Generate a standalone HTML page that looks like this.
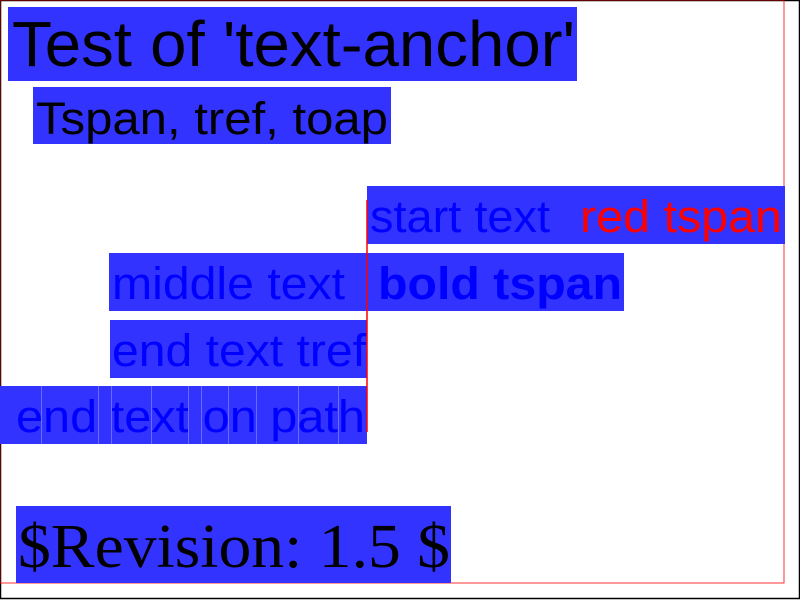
<!DOCTYPE html>
<html><head><style>html,body{margin:0;padding:0;background:#fff}svg{display:block}</style></head>
<body>
<svg width="800" height="600" xmlns="http://www.w3.org/2000/svg" font-family="Liberation Sans, sans-serif">
<rect x="0.5" y="0.5" width="799" height="598" fill="none" stroke="#000" stroke-width="1.5"/>
<rect x="0" y="0" width="784" height="583" fill="none" stroke="#f00" stroke-width="1" opacity="0.8"/>
<g fill="#3333ff">
<rect x="8" y="7" width="569" height="74"/>
<rect x="33" y="87" width="358" height="57"/>
<rect x="367" y="186" width="418" height="58"/>
<rect x="109" y="253" width="258" height="58"/>
<rect x="360" y="253" width="264" height="58"/>
<rect x="110" y="320" width="257" height="58"/>
<rect x="0" y="386" width="367" height="58"/>
<rect x="16" y="506" width="435" height="77"/>
</g>
<line x1="367" y1="200" x2="367" y2="432" stroke="#f00" stroke-width="1.5"/>
<g lengthAdjust="spacingAndGlyphs">
<text x="12" y="66" font-size="64" fill="#000" textLength="563" lengthAdjust="spacingAndGlyphs">Test of 'text-anchor'</text>
<text x="36" y="134" font-size="45" fill="#000" textLength="352" lengthAdjust="spacingAndGlyphs">Tspan, tref, toap</text>
<text x="370" y="232" font-size="45" fill="#0000ff" textLength="180" lengthAdjust="spacingAndGlyphs">start text</text>
<text x="580" y="232" font-size="45" fill="#f00" textLength="202" lengthAdjust="spacingAndGlyphs">red tspan</text>
<text x="112" y="299" font-size="45" fill="#0000ff" textLength="233" lengthAdjust="spacingAndGlyphs">middle text</text>
<text x="378" y="299" font-size="45" fill="#0000ff" font-weight="bold" textLength="244" lengthAdjust="spacingAndGlyphs">bold tspan</text>
<text x="112" y="366" font-size="45" fill="#0000ff" textLength="254" lengthAdjust="spacingAndGlyphs">end text tref</text>
<text x="16" y="432" font-size="45" fill="#0000ff" textLength="349" lengthAdjust="spacingAndGlyphs">end text on path</text>
<text x="18" y="567" font-size="62" fill="#000" font-family="Liberation Serif, serif" textLength="432" lengthAdjust="spacingAndGlyphs">$Revision: 1.5 $</text>
</g>
<g stroke="#6b6bff" stroke-width="1">
<line x1="41.5" y1="386" x2="41.5" y2="444"/><line x1="98.5" y1="386" x2="98.5" y2="444"/>
<line x1="111.5" y1="386" x2="111.5" y2="444"/><line x1="151.5" y1="386" x2="151.5" y2="444"/>
<line x1="188.5" y1="386" x2="188.5" y2="444"/><line x1="201.5" y1="386" x2="201.5" y2="444"/>
<line x1="228.5" y1="386" x2="228.5" y2="444"/><line x1="256.5" y1="386" x2="256.5" y2="444"/>
<line x1="298.5" y1="386" x2="298.5" y2="444"/><line x1="338.5" y1="386" x2="338.5" y2="444"/>
</g>
</svg>
</body></html>
